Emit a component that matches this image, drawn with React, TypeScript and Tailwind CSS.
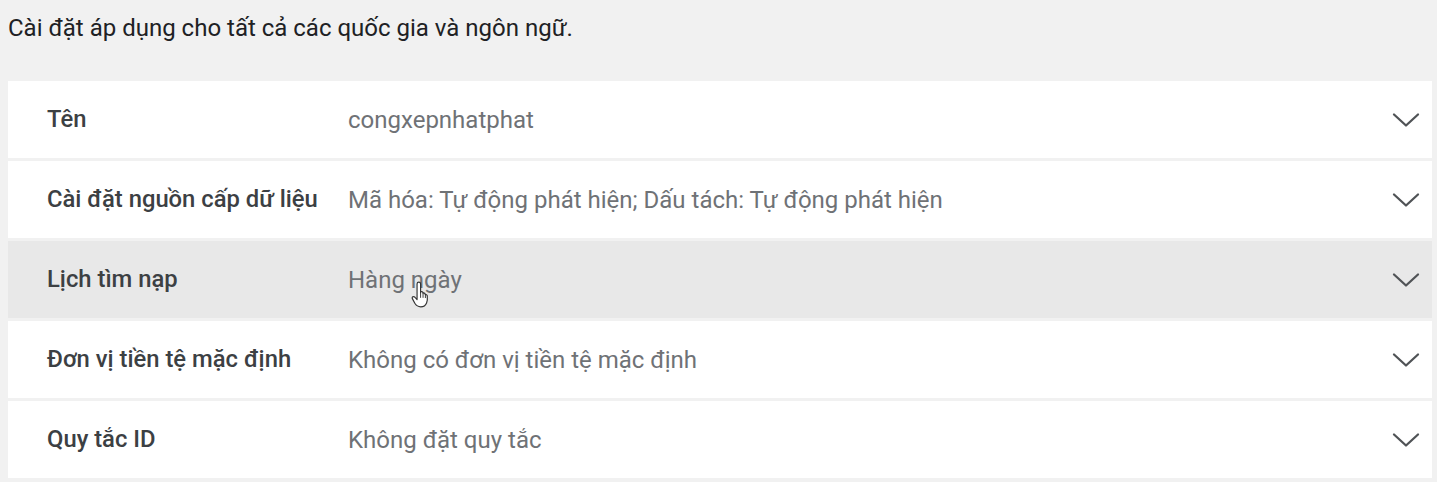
const ROWS = [
  { label: "Tên", value: "congxepnhatphat" },
  { label: "Cài đặt nguồn cấp dữ liệu", value: "Mã hóa: Tự động phát hiện; Dấu tách: Tự động phát hiện" },
  { label: "Lịch tìm nạp", value: "Hàng ngày", hover: true },
  { label: "Đơn vị tiền tệ mặc định", value: "Không có đơn vị tiền tệ mặc định" },
  { label: "Quy tắc ID", value: "Không đặt quy tắc" },
];

function Chevron() {
  return (
    <svg width="28" height="16" viewBox="0 0 28 16" fill="none">
      <path d="M2 2.5l12 11 12-11" stroke="#505356" strokeWidth="2.3" strokeLinecap="round" strokeLinejoin="round" />
    </svg>
  );
}

// hand cursor shown over the hovered row
function HandCursor() {
  return (
    <svg width="22" height="27" viewBox="0 0 17 23" className="absolute left-[409px] top-[281px]">
      <path
        d="M6 2.5c0-.9.7-1.5 1.5-1.5S9 1.6 9 2.5V10l.3-1c.8-.2 1.6.2 1.7 1l.1.4c.7-.4 1.6 0 1.8.8l.1.5c.7-.3 1.6.1 1.7 1 .2 2 .1 4.3-.6 6-.8 2-2.3 3.3-5 3.3-2.3 0-3.9-1.2-5-3L2 15c-.4-.8 0-1.6.8-1.7.6-.1 1.1.2 1.5.7L6 15.8V2.5z"
        fill="#fff"
        stroke="#333"
        strokeWidth="1"
        strokeLinejoin="round"
      />
      <path d="M9 10v4M11.1 10.4v3.6M13.1 11.7v2.5" stroke="#333" strokeWidth="0.8" strokeLinecap="round" />
    </svg>
  );
}

export default function App() {
  return (
    <div className="relative w-[1437px] h-[482px] bg-[#f1f1f1] overflow-hidden" style={{ fontFamily: "Roboto, 'Noto Sans', sans-serif" }}>
      <p className="pl-[8px] pt-[13px] h-[81px] text-[24px] leading-[30px] text-[#202124]">
        Cài đặt áp dụng cho tất cả các quốc gia và ngôn ngữ.
      </p>
      <div className="ml-[8px] w-[1424px] flex flex-col gap-[3px]">
        {ROWS.map((r) => (
          <div
            key={r.label}
            className={`h-[77px] flex items-center pl-[39px] pr-[12px] ${r.hover ? "bg-[#e8e8e8]" : "bg-white"}`}
          >
            <div className="w-[301px] text-[23.8px] font-medium text-[#3c4043]">{r.label}</div>
            <div className="flex-1 text-[24px] text-[#6f7276]">{r.value}</div>
            <Chevron />
          </div>
        ))}
      </div>
      <HandCursor />
    </div>
  );
}
